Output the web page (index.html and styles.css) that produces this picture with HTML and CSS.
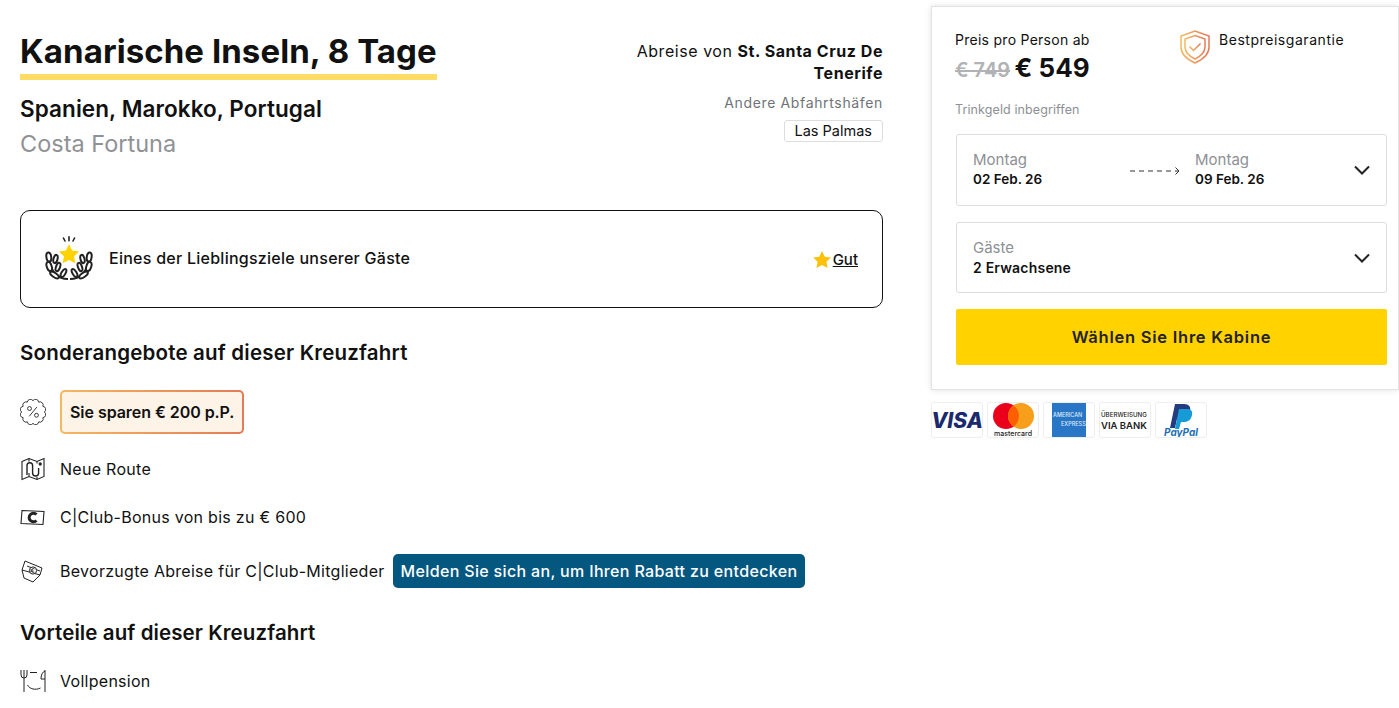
FILE: index.html
```html
<!DOCTYPE html>
<html lang="de">
<head>
<meta charset="utf-8">
<title>Kanarische Inseln, 8 Tage</title>
<link rel="stylesheet" href="styles.css">
</head>
<body>
<div class="page">
  <main class="main">
    <header class="head">
      <div class="head-left">
        <h1 class="title">Kanarische Inseln, 8 Tage</h1>
        <h2 class="countries">Spanien, Marokko, Portugal</h2>
        <p class="ship">Costa Fortuna</p>
      </div>
      <div class="head-right">
        <p class="depart">Abreise von <b>St. Santa Cruz De Tenerife</b></p>
        <p class="other">Andere Abfahrtshäfen</p>
        <span class="port">Las Palmas</span>
      </div>
    </header>

    <section class="fav">
      <svg class="fav-icon" width="48" height="44" viewBox="0 0 48 44">
        <g stroke="#222" stroke-width="1.6" stroke-linecap="round"><path d="M18.500 2l1.500 3"/><path d="M24 .8v4"/><path d="M29.500 2l-1.500 3"/></g>
        <path d="M24 8l3 6.500 7 1-5 4.800 1.300 7-6.300-3.400-6.300 3.400 1.300-7-5-4.800 7-1z" fill="#ffd200"/>
        <g id="branch" fill="#fff" stroke="#222" stroke-width="2">
          <path d="M23 43C13 43 6 36 4.500 24" fill="none"/>
          <ellipse cx="3.800" cy="21" rx="2.400" ry="4.600" transform="rotate(-8 3.800 21)"/>
          <ellipse cx="10.500" cy="23" rx="2" ry="4.200" transform="rotate(14 10.500 23)"/>
          <ellipse cx="4.200" cy="30.500" rx="2.400" ry="4.800" transform="rotate(-18 4.200 30.500)"/>
          <ellipse cx="13" cy="31" rx="2" ry="4.400" transform="rotate(20 13 31)"/>
          <ellipse cx="9.500" cy="39" rx="2.200" ry="5" transform="rotate(-55 9.500 39)"/>
          <ellipse cx="18.500" cy="37" rx="2" ry="4.400" transform="rotate(30 18.500 37)"/>
        </g>
        <use href="#branch" transform="matrix(-1 0 0 1 48 0)"/>
      </svg>
      <span class="fav-text">Eines der Lieblingsziele unserer Gäste</span>
      <span class="rating">
        <svg width="18" height="17" viewBox="0 0 24 23"><path d="M12 0l3.700 7.700 8.300 1.100-6 5.800 1.500 8.400-7.500-4-7.500 4 1.500-8.400-6-5.800 8.300-1.100z" fill="#ffc107"/></svg>
        <a class="rating-link">Gut</a>
      </span>
    </section>

    <h3 class="sec">Sonderangebote auf dieser Kreuzfahrt</h3>
    <ul class="list">
      <li class="row row-save">
        <svg class="ico" width="26" height="26" viewBox="1 1 24 24" fill="none" stroke="#333" stroke-width=".9"><path d="M13 2.500A2.900 2.900 0 0 1 18.250 3.900A2.900 2.900 0 0 1 22.100 7.750A2.900 2.900 0 0 1 23.500 13A2.900 2.900 0 0 1 22.100 18.250A2.900 2.900 0 0 1 18.250 22.100A2.900 2.900 0 0 1 13 23.500A2.900 2.900 0 0 1 7.750 22.100A2.900 2.900 0 0 1 3.900 18.250A2.900 2.900 0 0 1 2.500 13A2.900 2.900 0 0 1 3.900 7.750A2.900 2.900 0 0 1 7.750 3.900A2.900 2.900 0 0 1 13 2.500z"/><path d="M9.500 17l7-8.500"/><circle cx="9.800" cy="9.800" r="1.800"/><circle cx="16.200" cy="16" r="1.800"/></svg>
        <span class="save">Sie sparen € 200 p.P.</span>
      </li>
      <li class="row row-route">
        <svg class="ico" width="26" height="24" viewBox="0 0 26 24" fill="none" stroke="#222" stroke-width="1.100"><path d="M2 4.500l7-3 8 3 7-3v18l-7 3-8-3-7 3z"/><path d="M9 1.500v3M9 16v3.500M17 4.500v2M17 20v2.500"/><path d="M7 18V8.500a2.800 2.800 0 0 1 5.600 0v7.500a3 3 0 0 0 6 0v-5" stroke-width="1.400"/><circle cx="20.200" cy="7" r="1.100" fill="#222"/></svg>
        <span>Neue Route</span>
      </li>
      <li class="row row-bonus">
        <svg class="ico" width="26" height="18" viewBox="0 0 26 18"><path d="M2 2.500l22 1-1 13-22-1z" fill="none" stroke="#222" stroke-width="1.100"/><path d="M16.500 6.500A4.300 4.300 0 1 0 16.500 12.500" fill="none" stroke="#222" stroke-width="3"/></svg>
        <span>C|Club-Bonus von bis zu € 600</span>
      </li>
      <li class="row row-prio">
        <svg class="ico" width="26" height="24" viewBox="0 0 26 24" fill="none" stroke="#222" stroke-width="1"><path d="M2 11L5 2l17 7-2 7-7 7-9-4z"/><path d="M2 11l18 5M7 7l13 5"/><circle cx="13" cy="11.500" r="3.600" fill="#fff"/><path d="M14.500 9.800a2 2 0 1 0 0 3.400M10.500 11h3M10.500 12.300h3" stroke-width=".8"/></svg>
        <span>Bevorzugte Abreise für C|Club-Mitglieder</span>
        <span class="login">Melden Sie sich an, um Ihren Rabatt zu entdecken</span>
      </li>
    </ul>

    <h3 class="sec sec-adv">Vorteile auf dieser Kreuzfahrt</h3>
    <ul class="list">
      <li class="row row-food">
        <svg class="ico" width="26" height="24" viewBox="0 0 26 24" fill="none" stroke="#222" stroke-width="1"><path d="M1 1v5a3 3 0 0 0 6 0V1M4 1v22"/><path d="M25 1v22M25 2c-2.500 1-4 3.500-4 8h4"/><path d="M10 3.500h7M7.500 16c2 4 8 5.500 13 3"/></svg>
        <span>Vollpension</span>
      </li>
    </ul>
  </main>

  <aside class="side">
    <section class="card">
      <div class="price-top">
        <div class="price-box">
          <p class="price-label">Preis pro Person ab</p>
          <p class="price"><s class="old">€ 749</s> <b class="new">€ 549</b></p>
        </div>
        <div class="guarantee">
          <svg width="30" height="34" viewBox="0 0 30 34" fill="none">
            <defs><linearGradient id="gr" x1="0" x2="1"><stop offset="0" stop-color="#f4b860"/><stop offset="1" stop-color="#e47a58"/></linearGradient></defs>
            <path d="M15 1l14 5v11c0 7-5 12-14 16C6 29 1 24 1 17V6z" stroke="url(#gr)" stroke-width="1.500"/>
            <path d="M15 5.500l10 3.500v8c0 5.500-4 9-10 12-6-3-10-6.500-10-12V9z" stroke="url(#gr)" stroke-width="1.500"/>
            <path d="M9.500 16.500l4 4 7-7" stroke="url(#gr)" stroke-width="1.500"/>
          </svg>
          <span>Bestpreisgarantie</span>
        </div>
      </div>
      <p class="tip">Trinkgeld inbegriffen</p>
      <div class="field field-date">
        <div class="date date-from"><span class="f-label">Montag</span><b class="f-val">02 Feb. 26</b></div>
        <svg class="arrow" width="50" height="10" viewBox="0 0 50 10" fill="none" stroke="#333" stroke-width="1"><path d="M0 5h48" stroke-dasharray="5 4"/><path d="M45.500 1.500L49 5l-3.500 3.500"/></svg>
        <div class="date date-to"><span class="f-label">Montag</span><b class="f-val">09 Feb. 26</b></div>
        <svg class="chev" width="16" height="10" viewBox="0 0 16 10" fill="none" stroke="#222" stroke-width="2"><path d="M1 1.500l7 7 7-7"/></svg>
      </div>
      <div class="field field-guests">
        <div class="date"><span class="f-label">Gäste</span><b class="f-val">2 Erwachsene</b></div>
        <svg class="chev" width="16" height="10" viewBox="0 0 16 10" fill="none" stroke="#222" stroke-width="2"><path d="M1 1.500l7 7 7-7"/></svg>
      </div>
      <button class="cta">Wählen Sie Ihre Kabine</button>
    </section>
    <div class="pays">
      <span class="pay"><svg width="50" height="34" viewBox="0 0 50 34"><text x="25" y="25" text-anchor="middle" class="visa">VISA</text></svg></span>
      <span class="pay"><svg width="50" height="34" viewBox="0 0 50 34"><circle cx="18" cy="13" r="13" fill="#eb001b"/><circle cx="33" cy="13" r="13" fill="#f79e1b"/><path d="M25.500 2.400a13 13 0 0 1 0 21.200 13 13 0 0 1 0-21.200z" fill="#ff5f00"/><text x="25" y="32.500" text-anchor="middle" class="mc">mastercard</text></svg></span>
      <span class="pay"><svg width="50" height="34" viewBox="0 0 50 34"><rect x="8" y="0" width="34" height="34" fill="#2a76c6"/><text x="9" y="14" class="amex">AMERICAN</text><text x="17" y="23" class="amex">EXPRESS</text></svg></span>
      <span class="pay"><svg width="50" height="34" viewBox="0 0 50 34"><text x="1" y="14" class="bank-a">ÜBERWEISUNG</text><text x="1" y="26" class="bank-b">VIA BANK</text></svg></span>
      <span class="pay"><svg width="50" height="34" viewBox="0 0 50 34"><path d="M19 1h9c5 0 7 3 6 7-1 5-4 8-9 8h-4l-2 9h-5z" fill="#253b80"/><path d="M23 6h8c4 0 6 2.500 5 6-1 5-4 7-8 7h-3l-2 7h-4z" fill="#179bd7"/><text x="25" y="33" text-anchor="middle" class="pp">PayPal</text></svg></span>
    </div>
  </aside>
</div>
</body>
</html>
```
FILE: styles.css
```css
* { box-sizing: border-box; }
html, body { margin: 0; height: 708px; overflow: hidden; background: #fff; }
body { font-family: Inter, "Noto Sans", sans-serif; color: #111; }
p, h1, h2, h3, ul { margin: 0; padding: 0; }
ul { list-style: none; }

.page { display: flex; align-items: flex-start; padding-left: 20px; }
.main { width: 863px; flex: none; padding-top: 31px; }
.side { width: 468px; flex: none; margin-left: 48px; padding-top: 6px; }

.head { display: flex; justify-content: space-between; height: 179px; }
.title { display: inline-block; font-size: 33px; font-weight: 700; line-height: 41px; height: 49px; border-bottom: 6px solid #ffdc64; letter-spacing: .07px; white-space: nowrap; }
.countries { font-size: 22.500px; font-weight: 600; line-height: 30px; margin-top: 14px; letter-spacing: .08px; }
.ship { font-size: 23.500px; color: #8f9295; line-height: 30px; margin-top: 5px; }
.head-right { width: 260px; text-align: right; padding-top: 9px; }
.depart { font-size: 16px; line-height: 22px; letter-spacing: .55px; }
.depart b { font-weight: 700; }
.other { font-size: 14px; color: #6f7378; line-height: 20px; margin-top: 9px; letter-spacing: .65px; }
.port { display: inline-block; font-size: 14.500px; line-height: 20px; padding: 0 10px; border: 1px solid #ddd; border-radius: 3px; margin-top: 7px; }

.fav { display: flex; align-items: center; height: 98px; border: 1px solid #111; border-radius: 10px; padding: 0 24px; }
.fav-icon { flex: none; margin-top: -3px; }
.fav-text { font-size: 16px; font-weight: 500; margin-left: 16px; flex: 1; margin-top: -2px; letter-spacing: .26px; }
.rating { display: flex; align-items: center; gap: 2px; font-size: 15px; font-weight: 500; }
.rating-link { text-decoration: underline; }

.sec { font-size: 20.500px; font-weight: 600; line-height: 28px; margin-top: 31px; letter-spacing: .2px; }
.sec-adv { margin-top: 26px; letter-spacing: .1px; }
.row { display: flex; align-items: center; font-size: 16px; letter-spacing: .28px; }
.ico { flex: none; width: 26px; margin-right: 14px; }
.row-save { margin-top: 23px; height: 44px; }
.row-route { margin-top: 13px; height: 44px; }
.row-bonus { margin-top: 4px; height: 44px; }
.row-prio { margin-top: 10px; height: 44px; }
.row-food { margin-top: 12px; height: 44px; }
.save { display: block; font-weight: 600; line-height: 38px; height: 44px; padding: 1px 8px; border: 2px solid transparent; border-radius: 5px; background: linear-gradient(#fdf3e7, #fdf3e7) padding-box, linear-gradient(90deg, #f4b860, #e47a58) border-box; letter-spacing: -.05px; white-space: nowrap; }
.login { background: #04577f; color: #fff; font-weight: 500; border-radius: 5px; line-height: 34px; padding: 0 8px; margin-left: 8px; letter-spacing: .34px; white-space: nowrap; }

.card { height: 384px; border: 1px solid #e2e2e2; box-shadow: 0 0 6px rgba(0,0,0,.12); padding: 23px 12px 24px 24px; background: #fff; }
.price-top { display: flex; height: 53px; }
.price-box { width: 225px; margin-left: -1px; }
.price-label { font-size: 14px; line-height: 20px; letter-spacing: .27px; }
.price { line-height: 32px; white-space: nowrap; margin-top: 2px; }
.old { color: #b0b2b5; font-size: 20px; font-weight: 600; }
.new { font-size: 26px; font-weight: 700; }
.guarantee { display: flex; align-items: flex-start; gap: 9px; font-size: 14px; line-height: 20px; letter-spacing: .55px; }
.tip { font-size: 12.500px; color: #8d9094; margin: 18px 0 0 -1px; line-height: 18px; letter-spacing: .1px; }
.field { display: flex; align-items: center; width: 431px; border: 1px solid #ddd; border-radius: 3px; padding: 0 16px; }
.field-date { height: 72px; margin-top: 15px; }
.field-guests { height: 71px; margin-top: 16px; }
.date { display: flex; flex-direction: column; margin-top: -1px; }
.date-from { width: 157px; }
.date-to { margin-left: 15px; flex: 1; }
.f-label { font-size: 15px; color: #8d9094; line-height: 19px; }
.f-val { font-size: 13.500px; font-weight: 600; line-height: 19px; margin-top: 1px; }
.field-guests .f-val { font-size: 14px; letter-spacing: .2px; }
.chev { margin-left: auto; flex: none; }
.arrow { flex: none; margin-top: 2px; }
.cta { display: block; width: 431px; height: 56px; margin-top: 16px; background: #ffd200; border: 0; border-radius: 2px; font: 600 16.500px Inter, sans-serif; letter-spacing: .75px; color: #222; }

.pays { display: flex; gap: 4px; margin-top: 12px; }
.pay { width: 52px; height: 36px; border: 1px solid #eee; border-radius: 3px; background: #fff; display: block; overflow: hidden; }
.pay svg { display: block; }
.visa { font: italic 800 21px Inter, sans-serif; fill: #1a2a6c; }
.mc { font: 500 7px Inter, sans-serif; fill: #222; }
.amex { font: 500 5.500px Inter, sans-serif; fill: #dbe9f7; }
.bank-a { font: 500 6.200px Inter, sans-serif; fill: #222; }
.bank-b { font: 600 9.500px Inter, sans-serif; fill: #222; }
.pp { font: italic 700 10px Inter, sans-serif; fill: #1c6fb5; }
```
